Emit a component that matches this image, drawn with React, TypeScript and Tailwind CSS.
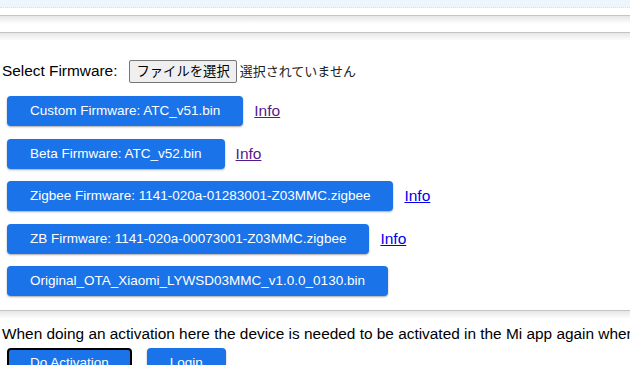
import React from "react";

const btn =
  "h-[30px] px-[23px] rounded-[4px] bg-[#1a73e8] text-white text-[13.5px] leading-none shadow-[0_1px_2px_rgba(0,0,0,0.35)] whitespace-nowrap";

function Hr() {
  return <div className="h-[9px] border-t border-[#c4c4c4] bg-gradient-to-b from-[#e6e6e6] to-white" />;
}

function Row({ label, info, visited }: { label: string; info?: boolean; visited?: boolean }) {
  return (
    <div className="flex items-center gap-[11px] pl-[7px]">
      <button className={btn}>{label}</button>
      {info && (
        <a href="#" className={"text-[15.5px] underline " + (visited ? "text-[#551a8b]" : "text-[#0000ee]")}>
          Info
        </a>
      )}
    </div>
  );
}

export default function App() {
  return (
    <div className="w-[630px] h-[365px] overflow-hidden bg-white text-black text-[15.4px] font-['Liberation_Sans',Arial,sans-serif]">
      <div className="h-[8px] bg-[#eef6fd] border-b border-dotted border-[#d3e2ef]" />
      <div className="mt-[7px]">
        <Hr />
      </div>
      <div className="mt-[8px]">
        <Hr />
      </div>
      <div className="mt-[18px] ml-[2px] flex items-center h-[24px]">
        <span>Select Firmware:</span>
        <button className="ml-[12px] h-[23px] px-[6px] border border-[#767676] rounded-[2px] bg-[#efefef] text-[13.33px] leading-none font-['Noto_Sans_CJK_JP',sans-serif]">
          ファイルを選択
        </button>
        <span className="ml-[3px] text-[13px] text-[#222] font-['Noto_Sans_CJK_JP',sans-serif]">選択されていません</span>
      </div>
      <div className="mt-[13px] flex flex-col gap-[12.5px]">
        <Row label="Custom Firmware: ATC_v51.bin" info visited />
        <Row label="Beta Firmware: ATC_v52.bin" info visited />
        <Row label="Zigbee Firmware: 1141-020a-01283001-Z03MMC.zigbee" info />
        <Row label="ZB Firmware: 1141-020a-00073001-Z03MMC.zigbee" info />
        <Row label="Original_OTA_Xiaomi_LYWSD03MMC_v1.0.0_0130.bin" />
      </div>
      <div className="mt-[14px]">
        <Hr />
      </div>
      <div className="mt-[6px] ml-[2px] whitespace-nowrap leading-[18px]">
        When doing an activation here the device is needed to be activated in the Mi app again when
      </div>
      <div className="mt-[5px] pl-[7px] flex gap-[15px]">
        <button className="h-[30px] px-[21px] rounded-[4px] bg-[#1a73e8] text-white text-[13.5px] leading-none border-2 border-black whitespace-nowrap">
          Do Activation
        </button>
        <button className={btn}>Login</button>
      </div>
    </div>
  );
}
